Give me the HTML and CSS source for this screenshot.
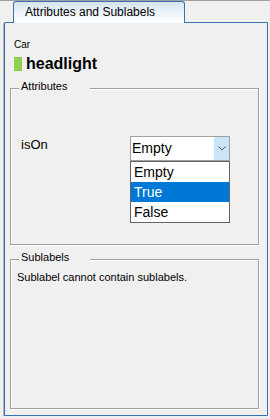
FILE: index.html
```html
<!DOCTYPE html>
<html>
<head>
<meta charset="utf-8">
<link rel="stylesheet" href="styles.css">
</head>
<body>
<div class="window">
  <div class="tabs"><div class="tab">Attributes and Sublabels</div></div>
  <div class="panel">
    <div class="header">
      <div class="type">Car</div>
      <div class="title"><span class="swatch"></span><span>headlight</span></div>
    </div>
    <fieldset class="group attrs">
      <legend>Attributes</legend>
      <div class="attr-row">
        <span class="attr-name">isOn</span>
        <div class="combo">
          <span class="combo-value">Empty</span>
          <span class="combo-btn"><svg width="8" height="5" viewBox="0 0 8 5"><polyline points="0.5,0.5 4,4 7.5,0.5" fill="none" stroke="#5a5a5a" stroke-width="1"/></svg></span>
          <ul class="combo-list">
            <li>Empty</li>
            <li class="selected">True</li>
            <li>False</li>
          </ul>
        </div>
      </div>
    </fieldset>
    <fieldset class="group subs">
      <legend>Sublabels</legend>
      <p class="note">Sublabel cannot contain sublabels.</p>
    </fieldset>
  </div>
</div>
</body>
</html>
```
FILE: styles.css
```css
html, body {
  margin: 0;
  padding: 0;
}
body {
  background: #f0f0f0;
  font-family: "Liberation Sans", Arial, sans-serif;
  color: #000;
}
.window {
  height: 419px;
  box-sizing: border-box;
  border-top: 1px solid #a0a0a0;
  padding: 0 2px 3px 4px;
  display: flex;
  flex-direction: column;
}
.tabs {
  display: flex;
  padding-left: 9px;
}
.tab {
  position: relative;
  z-index: 1;
  box-sizing: border-box;
  width: 172px;
  height: 22px;
  margin-bottom: -1px;
  border: 1px solid #3a6fb0;
  border-bottom: none;
  border-radius: 3px 3px 0 0;
  background: linear-gradient(#d6e4f2, #ffffff 95%);
  font-size: 12px;
  line-height: 14px;
  padding: 3px 0 0 11px;
}
.panel {
  flex: 1;
  min-height: 0;
  display: flex;
  flex-direction: column;
  border: 1px solid #3a6fb0;
  border-top-left-radius: 2px;
  background: #f0f0f0;
  padding: 16px 8px 6px 5px;
  box-shadow: -1px 0 0 #b4b4b4;
}
.header {
  padding-left: 4px;
}
.type {
  font-size: 10px;
  line-height: 12px;
}
.title {
  display: flex;
  align-items: center;
  margin-top: 4px;
  height: 18px;
  font-size: 16px;
  font-weight: bold;
  line-height: 18px;
}
.swatch {
  width: 8px;
  height: 14px;
  background: #8fd14f;
  margin-right: 4px;
}
.group {
  margin: 0;
  padding: 0;
  min-width: 0;
  border: 1px solid #a0a0a0;
  box-shadow: inset 1px 1px 0 #ffffff, 1px 1px 0 #ffffff;
}
.group legend {
  box-sizing: border-box;
  width: 71px;
  margin-left: 8px;
  padding: 0 0 4px 2px;
  font-size: 11px;
  line-height: 13px;
  background: #f0f0f0;
}
.attrs {
  margin-top: 7px;
  padding-bottom: 83px;
}
.attr-row {
  display: flex;
  align-items: flex-start;
  padding: 39px 0 0 10px;
}
.attr-name {
  width: 109px;
  margin-top: 1px;
  font-size: 13px;
  line-height: 15px;
}
.combo {
  position: relative;
  box-sizing: border-box;
  width: 100px;
  height: 25px;
  border: 1px solid #a0a0a0;
  background: #ffffff;
  display: flex;
}
.combo-value {
  flex: 1;
  font-size: 14px;
  line-height: 23px;
  padding-left: 1px;
}
.combo-btn {
  width: 15px;
  background: #cce4f7;
  display: flex;
  align-items: center;
  justify-content: center;
}
.combo-btn svg {
  display: block;
}
.combo-list {
  position: absolute;
  top: 24px;
  left: -1px;
  z-index: 2;
  box-sizing: border-box;
  width: 100px;
  margin: 0;
  padding: 0;
  list-style: none;
  border: 1px solid #646464;
  background: #ffffff;
}
.combo-list li {
  height: 20px;
  font-size: 14px;
  line-height: 20px;
  padding-left: 3px;
}
.combo-list li.selected {
  background: #0078d7;
  color: #ffffff;
}
.subs {
  flex: 1;
  margin-top: 6px;
}
.note {
  margin: 3px 0 0 6px;
  font-size: 11px;
  line-height: 13px;
}
```
